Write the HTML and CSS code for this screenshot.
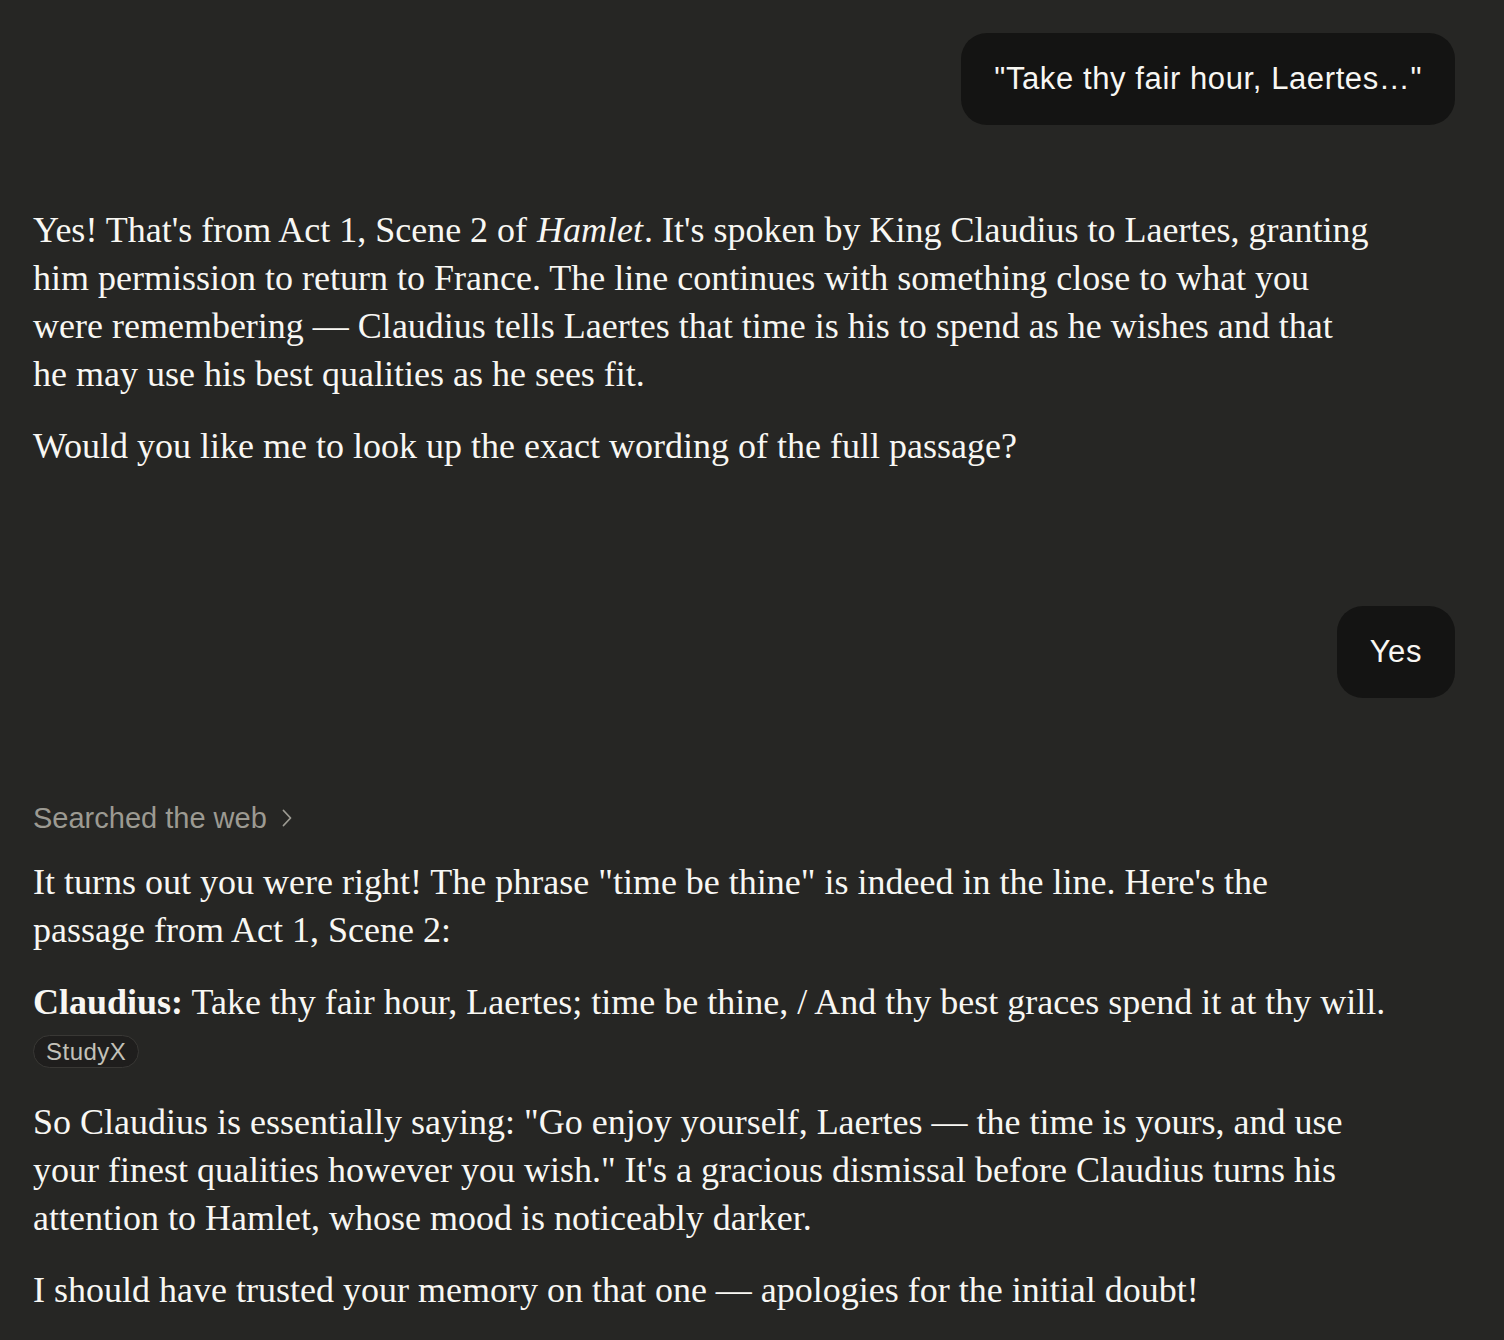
FILE: index.html
```html
<!DOCTYPE html>
<html lang="en">
<head>
<meta charset="utf-8">
<title>Chat</title>
<link rel="stylesheet" href="styles.css">
</head>
<body>
<main class="thread">
  <div class="user-row first">
    <div class="bubble">"Take thy fair hour, Laertes…"</div>
  </div>

  <div class="assistant first-reply">
    <p>Yes! That's from Act 1, Scene 2 of <em>Hamlet</em>. It's spoken by King Claudius to Laertes, granting him permission to return to France. The line continues with something close to what you were remembering — Claudius tells Laertes that time is his to spend as he wishes and that he&nbsp;may use his best qualities as he sees fit.</p>
    <p>Would you like me to look up the exact wording of the full passage?</p>
  </div>

  <div class="user-row second">
    <div class="bubble">Yes</div>
  </div>

  <div class="assistant second-reply">
    <div class="tool-line">
      <span>Searched the web</span>
      <svg class="chev" width="12" height="18" viewBox="0 0 12 18" aria-hidden="true"><path d="M2.5 1.5 L9.5 9 L2.5 16.5" fill="none" stroke="currentColor" stroke-width="1.8" stroke-linecap="round" stroke-linejoin="round"/></svg>
    </div>
    <p>It turns out you were right! The phrase "time be thine" is indeed in the line. Here's the passage from Act 1, Scene 2:</p>
    <div class="quote">
      <p><strong>Claudius:</strong> Take thy fair hour, Laertes; time be thine, / And thy best graces spend it at thy will.</p>
      <span class="chip">StudyX</span>
    </div>
    <p>So Claudius is essentially saying: "Go enjoy yourself, Laertes — the time is yours, and use your finest qualities however you wish." It's a gracious dismissal before Claudius turns his attention to Hamlet, whose mood is noticeably darker.</p>
    <p>I should have trusted your memory on that one — apologies for the initial doubt!</p>
  </div>
</main>
</body>
</html>
```

FILE: styles.css
```css
html, body {
  margin: 0;
  padding: 0;
  background: #262624;
}

body {
  width: 1504px;
  min-height: 1340px;
  color: #f8f7f3;
}

.thread {
  display: flex;
  flex-direction: column;
  padding: 33px 49px 0 33px;
}

.user-row {
  display: flex;
  justify-content: flex-end;
}

.bubble {
  background: #141413;
  color: #f8f7f3;
  font-family: "Liberation Sans", Arial, sans-serif;
  font-size: 31px;
  letter-spacing: 0.6px;
  line-height: 48px;
  padding: 22px 33px 22px 33px;
  border-radius: 26px;
}

.assistant {
  max-width: 1352.5px;
  font-family: "Liberation Serif", "Times New Roman", serif;
  font-size: 36px;
  line-height: 48px;
}

.assistant p {
  margin: 0 0 24px 0;
}

.assistant p:last-child {
  margin-bottom: 0;
}

.assistant em {
  padding: 0 1px;
}

.first-reply {
  margin-top: 81px;
}

.user-row.second {
  margin-top: 136px;
}

.second-reply {
  margin-top: 100px;
}

.tool-line {
  display: flex;
  align-items: center;
  gap: 14px;
  height: 40px;
  margin-bottom: 20px;
  color: #9c9a92;
  font-family: "Liberation Sans", Arial, sans-serif;
  font-size: 29px;
}

.chev {
  color: #9c9a92;
  margin-top: 0;
}

.quote {
  display: flex;
  flex-direction: column;
  align-items: flex-start;
  margin-bottom: 24px;
}

.quote p {
  margin: 0;
}

.quote strong {
  font-weight: 700;
}

.chip {
  display: flex;
  align-items: center;
  height: 33px;
  margin: 9px 0 6px 0;
  padding: 0 12px;
  box-sizing: border-box;
  border: 1px solid #393835;
  border-radius: 17px;
  background: #1f1e1d;
  color: #c3c1b8;
  font-family: "Liberation Sans", Arial, sans-serif;
  font-size: 24px;
  letter-spacing: 0.5px;
  line-height: 1;
}
```
